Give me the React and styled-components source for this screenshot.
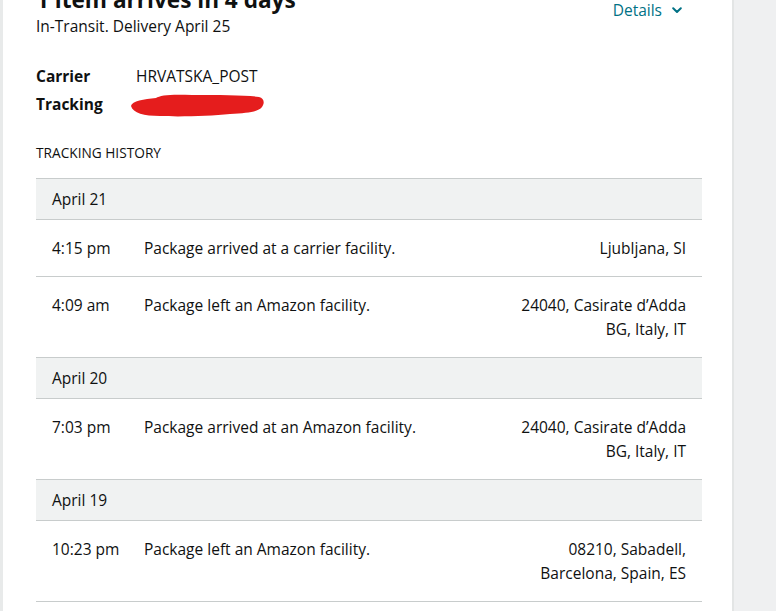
import React from 'react';
import styled, { createGlobalStyle } from 'styled-components';

const GlobalStyle = createGlobalStyle`
  html, body {
    margin: 0;
    padding: 0;
    background: #eff0f1;
  }
  body {
    font-family: "Open Sans", "Liberation Sans", Arial, sans-serif;
    color: #0f1111;
    overflow: hidden;
  }
`;

const Page = styled.div`
  display: flex;
  height: 611px;
  background: #eff0f1;
  border-left: 3px solid #e8eaea;
`;

const Card = styled.div`
  width: 731px;
  box-sizing: border-box;
  background: #fff;
  border-right: 2px solid #e3e5e5;
  padding: 0 30px 0 33px;
  overflow: hidden;
`;

const Header = styled.div`
  display: flex;
  justify-content: space-between;
  align-items: flex-start;
  margin-top: -15px;
`;

const Title = styled.h1`
  margin: 0;
  font-size: 22.6px;
  line-height: 30px;
  font-weight: 700;
`;

const Sub = styled.div`
  font-size: 15.5px;
  line-height: 20px;
  margin-top: 1px;
`;

const DetailsLink = styled.a`
  display: flex;
  align-items: center;
  gap: 10px;
  margin-top: 15px;
  margin-right: 20px;
  color: #007185;
  font-size: 15.5px;
  line-height: 20px;
  cursor: pointer;
`;

const Info = styled.div`
  display: grid;
  grid-template-columns: 100px 1fr;
  grid-auto-rows: 20px;
  row-gap: 8px;
  margin-top: 30px;
  font-size: 15.5px;
  line-height: 20px;
`;

const Label = styled.div`
  font-weight: 700;
`;

const Value = styled.div`
  display: flex;
  align-items: center;
  margin-left: ${p => (p.$shift ? -6 : 0)}px;
`;

const Section = styled.div`
  margin-top: 30px;
  font-size: 13.7px;
  line-height: 18px;
  text-transform: uppercase;
`;

const Table = styled.div`
  margin-top: 16px;
  border-top: 1px solid #c8cccc;
`;

const DateRow = styled.div`
  background: #f0f2f2;
  padding: 8px 16px;
  line-height: 24px;
  font-size: 15.5px;
  border-bottom: 1px solid #c8cccc;
`;

const EventRow = styled.div`
  display: grid;
  grid-template-columns: 92px 1fr auto;
  padding: 16px;
  line-height: 24px;
  font-size: 15.5px;
  border-bottom: 1px solid #c8cccc;
  min-height: ${p => (p.$tall ? 48 : 24)}px;
`;

const Location = styled.div`
  text-align: right;
`;

const Chevron = () => (
  <svg width="10" height="7" viewBox="0 0 10 7">
    <path d="M1.2 1.3 L5 5 L8.8 1.3" fill="none" stroke="#007185" strokeWidth="2" strokeLinecap="round" strokeLinejoin="round" />
  </svg>
);

const Scribble = () => (
  <svg width="134" height="22" viewBox="0 0 134 22" style={{ overflow: 'visible' }}>
    <path
      d="M1 13 C2 8 14 6 26 5 C30 2 42 1 62 2 C90 2 116 2 129 4 C134 5 135 10 132 14 C128 19 118 20 100 21 C80 23 50 24 30 23 C14 23 3 20 1 13 Z"
      fill="#e51d1d"
    />
  </svg>
);

const history = [
  {
    date: 'April 21',
    events: [
      { time: '4:15 pm', text: 'Package arrived at a carrier facility.', loc: ['Ljubljana, SI'] },
      { time: '4:09 am', text: 'Package left an Amazon facility.', loc: ['24040, Casirate d’Adda', 'BG, Italy, IT'] },
    ],
  },
  {
    date: 'April 20',
    events: [
      { time: '7:03 pm', text: 'Package arrived at an Amazon facility.', loc: ['24040, Casirate d’Adda', 'BG, Italy, IT'] },
    ],
  },
  {
    date: 'April 19',
    events: [
      { time: '10:23 pm', text: 'Package left an Amazon facility.', loc: ['08210, Sabadell,', 'Barcelona, Spain, ES'] },
    ],
  },
];

export default function App() {
  return (
    <>
      <GlobalStyle />
      <Page>
        <Card>
          <Header>
            <div>
              <Title>1 item arrives in 4 days</Title>
              <Sub>In-Transit. Delivery April 25</Sub>
            </div>
            <DetailsLink>
              Details <Chevron />
            </DetailsLink>
          </Header>

          <Info>
            <Label>Carrier</Label>
            <Value>HRVATSKA_POST</Value>
            <Label>Tracking</Label>
            <Value $shift><Scribble /></Value>
          </Info>

          <Section>Tracking History</Section>

          <Table>
            {history.map(day => (
              <React.Fragment key={day.date}>
                <DateRow>{day.date}</DateRow>
                {day.events.map(ev => (
                  <EventRow key={ev.time} $tall={ev.loc.length > 1}>
                    <div>{ev.time}</div>
                    <div>{ev.text}</div>
                    <Location>
                      {ev.loc.map(l => (
                        <div key={l}>{l}</div>
                      ))}
                    </Location>
                  </EventRow>
                ))}
              </React.Fragment>
            ))}
          </Table>
        </Card>
      </Page>
    </>
  );
}
